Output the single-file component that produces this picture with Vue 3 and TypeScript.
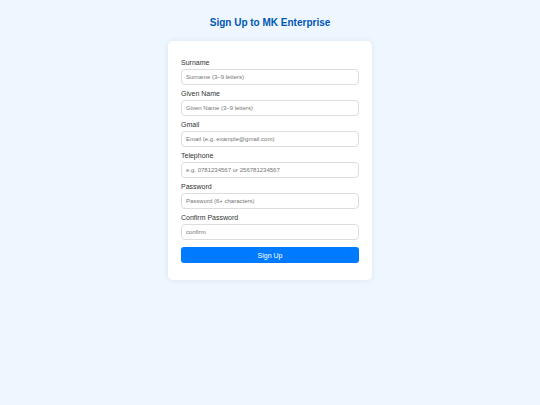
<script setup lang="ts">
import { reactive } from 'vue'

interface Field {
  id: string
  label: string
  type: string
  placeholder: string
}

const fields: Field[] = [
  { id: 'surname', label: 'Surname', type: 'text', placeholder: 'Surname (3–9 letters)' },
  { id: 'givenName', label: 'Given Name', type: 'text', placeholder: 'Given Name (3–9 letters)' },
  { id: 'gmail', label: 'Gmail', type: 'email', placeholder: 'Email (e.g. example@gmail.com)' },
  { id: 'telephone', label: 'Telephone', type: 'tel', placeholder: 'e.g. 0781234567 or 256781234567' },
  { id: 'password', label: 'Password', type: 'password', placeholder: 'Password (6+ characters)' },
  { id: 'confirm', label: 'Confirm Password', type: 'password', placeholder: 'confirm' },
]

const values = reactive<Record<string, string>>({})
</script>

<template>
  <main class="page">
    <h1 class="title">Sign Up to MK Enterprise</h1>
    <form class="card" @submit.prevent>
      <div v-for="field in fields" :key="field.id" class="field">
        <label class="label" :for="field.id">{{ field.label }}</label>
        <input
          :id="field.id"
          v-model="values[field.id]"
          class="input"
          :type="field.type"
          :placeholder="field.placeholder"
        />
      </div>
      <button class="submit" type="submit">Sign Up</button>
    </form>
  </main>
</template>

<style>
body {
  margin: 0;
  background: #eef6ff;
}
</style>

<style scoped>
.page {
  padding: 16px;
  font-family: "Liberation Sans", Arial, sans-serif;
}
.title {
  margin: 0 0 12px;
  font-size: 10px;
  line-height: 13px;
  text-align: center;
  color: #0056b3;
}
.card {
  box-sizing: border-box;
  max-width: 204px;
  margin: 0 auto;
  padding: 17px 13px;
  border-radius: 5px;
  background: #fff;
  box-shadow: 0 0 6px rgba(0, 0, 0, 0.08);
}
.field {
  display: flex;
  flex-direction: column;
  gap: 2px;
  margin-bottom: 4px;
}
.label {
  font-size: 7px;
  line-height: 9px;
  color: #333;
}
.input {
  box-sizing: border-box;
  width: 100%;
  height: 16px;
  padding: 0 4px;
  border: 1px solid #ddd;
  border-radius: 4px;
  font-family: inherit;
  font-size: 6px;
}
.input::placeholder {
  color: #757575;
}
.submit {
  display: block;
  width: 100%;
  height: 16px;
  margin-top: 7px;
  padding: 0;
  border: 0;
  border-radius: 3px;
  background: #007bff;
  color: #fff;
  font-family: inherit;
  font-size: 7px;
  cursor: pointer;
}
</style>
